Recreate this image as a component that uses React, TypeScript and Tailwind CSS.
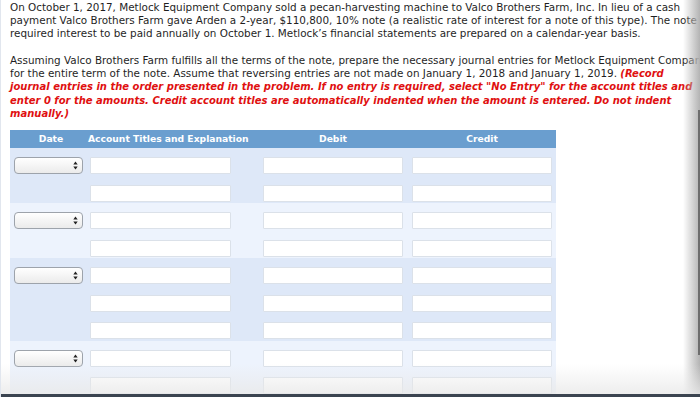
import React from "react";

const SelectBox = () => (
  <div className="flex h-[17px] w-[69px] items-center justify-end rounded-[4px] border border-[#9da3ab] bg-gradient-to-b from-white to-[#ebebeb] pr-[4px]">
    <svg width="5" height="9" viewBox="0 0 5 9" aria-hidden="true">
      <path d="M2.5 0.5 L4.7 3.6 L0.3 3.6 Z" fill="#222" />
      <path d="M2.5 8.5 L4.7 5.4 L0.3 5.4 Z" fill="#222" />
    </svg>
  </div>
);

const Field = ({ w }: { w: string }) => (
  <div className={`h-[17px] ${w} rounded-[1px] border border-[#dbe1e9] bg-white`} />
);

const Row = ({ date }: { date: boolean }) => (
  <div className="flex h-[27.5px] items-start pt-[9px]">
    <div className="w-[78px] pl-[4px]">{date && <SelectBox />}</div>
    <div className="w-[175px] pl-[2px]">
      <Field w="w-[141px]" />
    </div>
    <div className="w-[149px]">
      <Field w="w-[140px]" />
    </div>
    <div className="w-[144px]">
      <Field w="w-[140px]" />
    </div>
  </div>
);

const groups = [
  { rows: 2, bg: "bg-[#dee8f8]" },
  { rows: 2, bg: "bg-[#edf3fd]" },
  { rows: 3, bg: "bg-[#dee8f8]" },
  { rows: 2, bg: "bg-[#edf3fd]" },
];

export default function App() {
  return (
    <div className="relative h-[397px] w-[700px] overflow-hidden border-l border-[#e1e6ee] bg-white font-['DejaVu_Sans',Verdana,sans-serif]">
      <div className="whitespace-nowrap pl-[9px] pt-[1px] text-[10.4px] leading-[13.2px] text-[#1f1f1f]">
        <p>
          On October 1, 2017, Metlock Equipment Company sold a pecan-harvesting machine to Valco Brothers Farm, Inc. In lieu of a cash
          <br />
          payment Valco Brothers Farm gave Arden a 2-year, $110,800, 10% note (a realistic rate of interest for a note of this type). The note
          <br />
          required interest to be paid annually on October 1. Metlock’s financial statements are prepared on a calendar-year basis.
        </p>
        <p className="mt-[13.4px]">
          Assuming Valco Brothers Farm fulfills all the terms of the note, prepare the necessary journal entries for Metlock Equipment Company
          <br />
          for the entire term of the note. Assume that reversing entries are not made on January 1, 2018 and January 1, 2019.{" "}
          <span className="text-[10px] font-bold italic text-[#e01010]">(Record</span>
          <br />
          <span className="text-[10px] font-bold italic text-[#e01010]">
            journal entries in the order presented in the problem. If no entry is required, select "No Entry" for the account titles and
            <br />
            enter 0 for the amounts. Credit account titles are automatically indented when the amount is entered. Do not indent
            <br />
            manually.)
          </span>
        </p>
      </div>

      <div className="ml-[9px] mt-[10px] w-[546px]">
        <div className="flex h-[18px] items-center bg-[#6a9ecf] text-[9.2px] font-bold text-white">
          <div className="w-[78px] pl-[4px] text-center">Date</div>
          <div className="w-[175px]">Account Titles and Explanation</div>
          <div className="w-[149px] pr-[9px] text-center">Debit</div>
          <div className="w-[144px] pr-[4px] text-center">Credit</div>
        </div>
        {groups.map((g, gi) => (
          <div key={gi} className={g.bg}>
            {Array.from({ length: g.rows }).map((_, ri) => (
              <Row key={ri} date={ri === 0} />
            ))}
          </div>
        ))}
      </div>

      {/* right window edge shadow */}
      <div className="absolute right-0 top-0 bottom-[3px] w-[17px] bg-gradient-to-r from-white/0 to-[#b3b3b3]" />
      <div className="absolute right-0 top-[110px] h-[245px] w-[2px] bg-[#6d6d6d]" />
      {/* bottom fade */}
      <div className="absolute bottom-[3px] left-0 right-0 h-[30px] bg-gradient-to-b from-white/0 to-[#e9e9e9]/80" />
      <div className="absolute bottom-0 left-0 right-0 h-[3px] bg-[#3b4450]" />
    </div>
  );
}
